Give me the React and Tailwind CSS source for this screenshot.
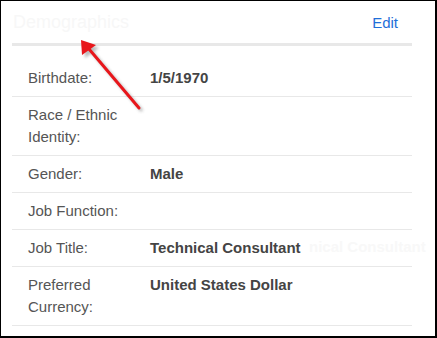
import React from "react";

const rows = [
  { label: "Birthdate:", value: "1/5/1970" },
  { label: "Race / Ethnic Identity:", value: "" },
  { label: "Gender:", value: "Male" },
  { label: "Job Function:", value: "" },
  { label: "Job Title:", value: "Technical Consultant" },
  { label: "Preferred Currency:", value: "United States Dollar" },
];

const Arrow = () => (
  <svg
    className="absolute left-0 top-0 pointer-events-none"
    width="437"
    height="338"
    viewBox="0 0 437 338"
  >
    <defs>
      <filter id="blur" x="-20%" y="-20%" width="140%" height="140%">
        <feGaussianBlur stdDeviation="1.5" />
      </filter>
    </defs>
    {/* shadow */}
    <g filter="url(#blur)" opacity="0.4" transform="translate(3 3)">
      <line x1="138" y1="107" x2="88" y2="48" stroke="#555" strokeWidth="3" />
      <polygon points="80,39 81,54 95,44" fill="#555" />
    </g>
    <line x1="138" y1="107" x2="88" y2="48" stroke="#e8161b" strokeWidth="3" strokeLinecap="round" />
    <polygon points="80,39 81,54 95,44" fill="#e8161b" />
  </svg>
);

export default function App() {
  return (
    <div
      className="relative w-[437px] h-[338px] bg-white border-l border-t border-r-2 border-b-2 border-black pl-[11px] pr-[23px] overflow-hidden"
      style={{ fontFamily: '"Liberation Sans", Arial, sans-serif' }}
    >
      {/* header */}
      <div className="flex items-center justify-between h-[45px] border-b-[3px] border-[#e8e8e8] pl-[1px] pr-[14px]">
        <h2 className="text-[18px] text-[#f7f7f7] leading-none">Demographics</h2>
        <a className="text-[15px] text-[#1f6fd8] leading-none">Edit</a>
      </div>

      {/* details */}
      <div className="mt-[14px]">
        {rows.map((row, i) => (
          <div key={i} className="flex border-b border-[#e8e8e8] text-[15px] leading-[22px]">
            <div className="w-[122px] shrink-0 pl-4 py-[7px] text-[#555555]">{row.label}</div>
            <div className="pl-4 py-[7px] font-bold text-[#444444]">{row.value}</div>
          </div>
        ))}
      </div>

      {/* faint ghost text from the capture */}
      <span className="absolute left-[308px] top-[235px] text-[15px] leading-[22px] font-bold text-[#f8f8f8]">
        nical Consultant
      </span>

      <Arrow />
    </div>
  );
}
